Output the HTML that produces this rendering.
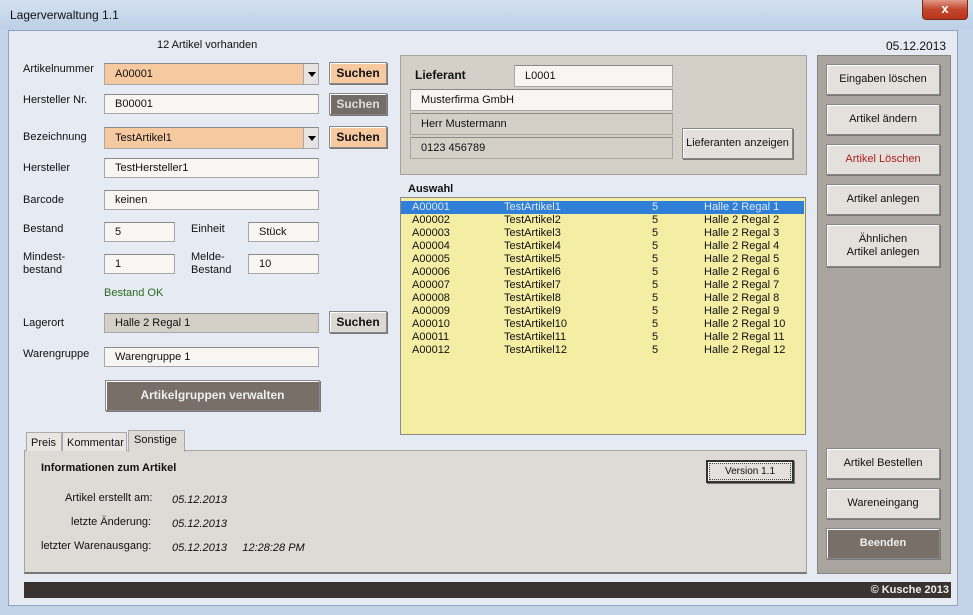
<!DOCTYPE html>
<html><head><meta charset="utf-8"><style>
*{box-sizing:border-box;margin:0;padding:0}
body{width:973px;height:615px;overflow:hidden;background:#c3d3e8;font-family:"Liberation Sans",sans-serif;font-size:11px;color:#111;position:relative}
.a{position:absolute;white-space:nowrap}
.tb{left:0;top:0;width:973px;height:30px;background:linear-gradient(#d4e1f1,#bccfe6)}
.client{left:8px;top:30px;width:950px;height:576px;background:#e6eaf2;border:1px solid #8fa3bf}
.in{background:#f7f6f3;border:1px solid #a8a8a8;border-top-color:#8a8a8a;padding:0 0 0 10px;line-height:18px}
.or{background:#f6c9a0}
.gr{background:#d4d0c8}
.btn{border:1px solid #888;background:#e4e1dc;box-shadow:inset 1px 1px 0 #fff,1px 1px 0 #777;text-align:center}
.sb{font-weight:bold;font-size:12px;line-height:20px}
.dd{position:absolute;right:0;top:0;width:15px;height:100%;background:#e6e4e0;border-left:1px solid #aaa}
.dd:after{content:"";position:absolute;left:4px;top:8px;border:4px solid transparent;border-top:5px solid #000;border-bottom:0}
.rb{left:826px;width:114px;height:31px;line-height:29px;font-size:11px}
.row{position:absolute;left:0;width:403px;height:13px;line-height:13px}
.row span{position:absolute}
</style></head><body>
<div class="a tb"></div>
<div class="a" style="left:10px;top:8px;font-size:12px">Lagerverwaltung 1.1</div>
<div class="a" style="left:922px;top:0;width:46px;height:20px;background:linear-gradient(#e09a88,#c4452c 50%,#b8361e);border:1px solid #7a2a1a;border-top:0;border-radius:0 0 4px 4px;color:#fff;text-align:center;font-weight:bold;font-size:13px;line-height:18px">x</div>
<div class="a client"></div>

<div class="a" style="left:157px;top:39px">12 Artikel vorhanden</div>
<div class="a" style="left:886px;top:39px;font-size:12px">05.12.2013</div>

<div class="a" style="left:23px;top:63px">Artikelnummer</div>
<div class="a" style="left:23px;top:94px">Hersteller Nr.</div>
<div class="a" style="left:23px;top:131px">Bezeichnung</div>
<div class="a" style="left:23px;top:162px">Hersteller</div>
<div class="a" style="left:23px;top:194px">Barcode</div>
<div class="a" style="left:23px;top:223px">Bestand</div>
<div class="a" style="left:23px;top:251px;line-height:13px">Mindest-<br>bestand</div>
<div class="a" style="left:191px;top:223px">Einheit</div>
<div class="a" style="left:191px;top:251px;line-height:13px">Melde-<br>Bestand</div>
<div class="a" style="left:23px;top:317px">Lagerort</div>
<div class="a" style="left:23px;top:348px">Warengruppe</div>

<div class="a in or" style="left:104px;top:63px;width:215px;height:22px;line-height:20px">A00001<div class="dd"></div></div>
<div class="a in" style="left:104px;top:94px;width:215px;height:20px">B00001</div>
<div class="a in or" style="left:104px;top:127px;width:215px;height:22px;line-height:20px">TestArtikel1<div class="dd"></div></div>
<div class="a in" style="left:104px;top:158px;width:215px;height:20px">TestHersteller1</div>
<div class="a in" style="left:104px;top:190px;width:215px;height:20px">keinen</div>
<div class="a in" style="left:104px;top:222px;width:71px;height:20px">5</div>
<div class="a in" style="left:248px;top:222px;width:71px;height:20px">Stück</div>
<div class="a in" style="left:104px;top:254px;width:71px;height:20px">1</div>
<div class="a in" style="left:248px;top:254px;width:71px;height:20px">10</div>
<div class="a" style="left:104px;top:287px;color:#2a6a20">Bestand OK</div>
<div class="a in gr" style="left:104px;top:313px;width:215px;height:20px">Halle 2 Regal 1</div>
<div class="a in" style="left:104px;top:347px;width:215px;height:20px">Warengruppe 1</div>
<div class="a btn sb" style="left:105px;top:380px;width:215px;height:31px;line-height:29px;background:#776f68;color:#eee;font-size:12px">Artikelgruppen verwalten</div>

<div class="a btn sb" style="left:329px;top:62px;width:58px;height:22px;background:#f6c9a0">Suchen</div>
<div class="a btn sb" style="left:329px;top:93px;width:58px;height:22px;background:#746c66;color:#ddd">Suchen</div>
<div class="a btn sb" style="left:329px;top:126px;width:58px;height:22px;background:#f6c9a0">Suchen</div>
<div class="a btn sb" style="left:329px;top:311px;width:58px;height:22px;background:#dcd9d4">Suchen</div>

<div class="a" style="left:400px;top:55px;width:407px;height:120px;background:#d4d0c8;border:1px solid #a8a49c"></div>
<div class="a" style="left:415px;top:68px;font-weight:bold;font-size:12px">Lieferant</div>
<div class="a in" style="left:514px;top:65px;width:159px;height:22px;line-height:20px">L0001</div>
<div class="a in" style="left:410px;top:89px;width:263px;height:22px;line-height:20px">Musterfirma GmbH</div>
<div class="a in gr" style="left:410px;top:113px;width:263px;height:22px;line-height:20px">Herr Mustermann</div>
<div class="a in gr" style="left:410px;top:137px;width:263px;height:22px;line-height:20px">0123 456789</div>
<div class="a btn" style="left:682px;top:128px;width:111px;height:31px;line-height:29px">Lieferanten anzeigen</div>

<div class="a" style="left:408px;top:183px;font-weight:bold">Auswahl</div>
<div class="a" style="left:400px;top:197px;width:406px;height:238px;background:#f4eea4;border:1px solid #8a8a80">
<div class="row" style="top:3px;background:#2f7ed8;color:#dfe9f5"><span style="left:11px">A00001</span><span style="left:103px">TestArtikel1</span><span style="left:251px">5</span><span style="left:303px">Halle 2 Regal 1</span></div>
<div class="row" style="top:16px"><span style="left:11px">A00002</span><span style="left:103px">TestArtikel2</span><span style="left:251px">5</span><span style="left:303px">Halle 2 Regal 2</span></div>
<div class="row" style="top:29px"><span style="left:11px">A00003</span><span style="left:103px">TestArtikel3</span><span style="left:251px">5</span><span style="left:303px">Halle 2 Regal 3</span></div>
<div class="row" style="top:42px"><span style="left:11px">A00004</span><span style="left:103px">TestArtikel4</span><span style="left:251px">5</span><span style="left:303px">Halle 2 Regal 4</span></div>
<div class="row" style="top:55px"><span style="left:11px">A00005</span><span style="left:103px">TestArtikel5</span><span style="left:251px">5</span><span style="left:303px">Halle 2 Regal 5</span></div>
<div class="row" style="top:68px"><span style="left:11px">A00006</span><span style="left:103px">TestArtikel6</span><span style="left:251px">5</span><span style="left:303px">Halle 2 Regal 6</span></div>
<div class="row" style="top:81px"><span style="left:11px">A00007</span><span style="left:103px">TestArtikel7</span><span style="left:251px">5</span><span style="left:303px">Halle 2 Regal 7</span></div>
<div class="row" style="top:94px"><span style="left:11px">A00008</span><span style="left:103px">TestArtikel8</span><span style="left:251px">5</span><span style="left:303px">Halle 2 Regal 8</span></div>
<div class="row" style="top:107px"><span style="left:11px">A00009</span><span style="left:103px">TestArtikel9</span><span style="left:251px">5</span><span style="left:303px">Halle 2 Regal 9</span></div>
<div class="row" style="top:120px"><span style="left:11px">A00010</span><span style="left:103px">TestArtikel10</span><span style="left:251px">5</span><span style="left:303px">Halle 2 Regal 10</span></div>
<div class="row" style="top:133px"><span style="left:11px">A00011</span><span style="left:103px">TestArtikel11</span><span style="left:251px">5</span><span style="left:303px">Halle 2 Regal 11</span></div>
<div class="row" style="top:146px"><span style="left:11px">A00012</span><span style="left:103px">TestArtikel12</span><span style="left:251px">5</span><span style="left:303px">Halle 2 Regal 12</span></div>
</div>

<div class="a" style="left:817px;top:55px;width:134px;height:519px;background:#aaa49e;border:1px solid #8a847e"></div>
<div class="a btn rb" style="top:64px">Eingaben löschen</div>
<div class="a btn rb" style="top:104px">Artikel ändern</div>
<div class="a btn rb" style="top:144px;color:#b02020">Artikel Löschen</div>
<div class="a btn rb" style="top:184px">Artikel anlegen</div>
<div class="a btn rb" style="top:224px;height:43px;line-height:13px;padding-top:8px">Ähnlichen<br>Artikel anlegen</div>
<div class="a btn rb" style="top:448px">Artikel Bestellen</div>
<div class="a btn rb" style="top:488px">Wareneingang</div>
<div class="a btn rb" style="top:528px;background:#776f68;color:#eee;font-weight:bold">Beenden</div>

<div class="a" style="left:24px;top:450px;width:783px;height:124px;background:#dedbd6;border:1px solid #a8a49c;border-bottom:2px solid #777"></div>
<div class="a" style="left:26px;top:432px;width:36px;height:19px;border:1px solid #aaa;border-bottom:0;background:#e8e6e2;padding:4px 0 0 4px">Preis</div>
<div class="a" style="left:62px;top:432px;width:65px;height:19px;border:1px solid #aaa;border-bottom:0;background:#e8e6e2;padding:4px 0 0 4px">Kommentar</div>
<div class="a" style="left:128px;top:430px;width:57px;height:22px;border:1px solid #aaa;border-bottom:0;background:#dedbd6;padding:3px 0 0 5px">Sonstige</div>
<div class="a" style="left:41px;top:462px;font-weight:bold">Informationen zum Artikel</div>
<div class="a btn" style="left:706px;top:460px;width:88px;height:23px;line-height:20px;border:2px solid #333;outline:1px dotted #444;outline-offset:-4px;font-size:10px">Version 1.1</div>
<div class="a" style="left:65px;top:492px">Artikel erstellt am:</div>
<div class="a" style="left:71px;top:516px">letzte Änderung:</div>
<div class="a" style="left:41px;top:540px">letzter Warenausgang:</div>
<div class="a" style="left:172px;top:494px;font-style:italic">05.12.2013</div>
<div class="a" style="left:172px;top:518px;font-style:italic">05.12.2013</div>
<div class="a" style="left:172px;top:542px;font-style:italic">05.12.2013&nbsp;&nbsp;&nbsp;&nbsp;&nbsp;12:28:28 PM</div>

<div class="a" style="left:24px;top:582px;width:927px;height:16px;background:#3b332f;color:#eee;font-weight:bold;text-align:right;padding-right:2px;line-height:16px">© Kusche 2013</div>
</body></html>
